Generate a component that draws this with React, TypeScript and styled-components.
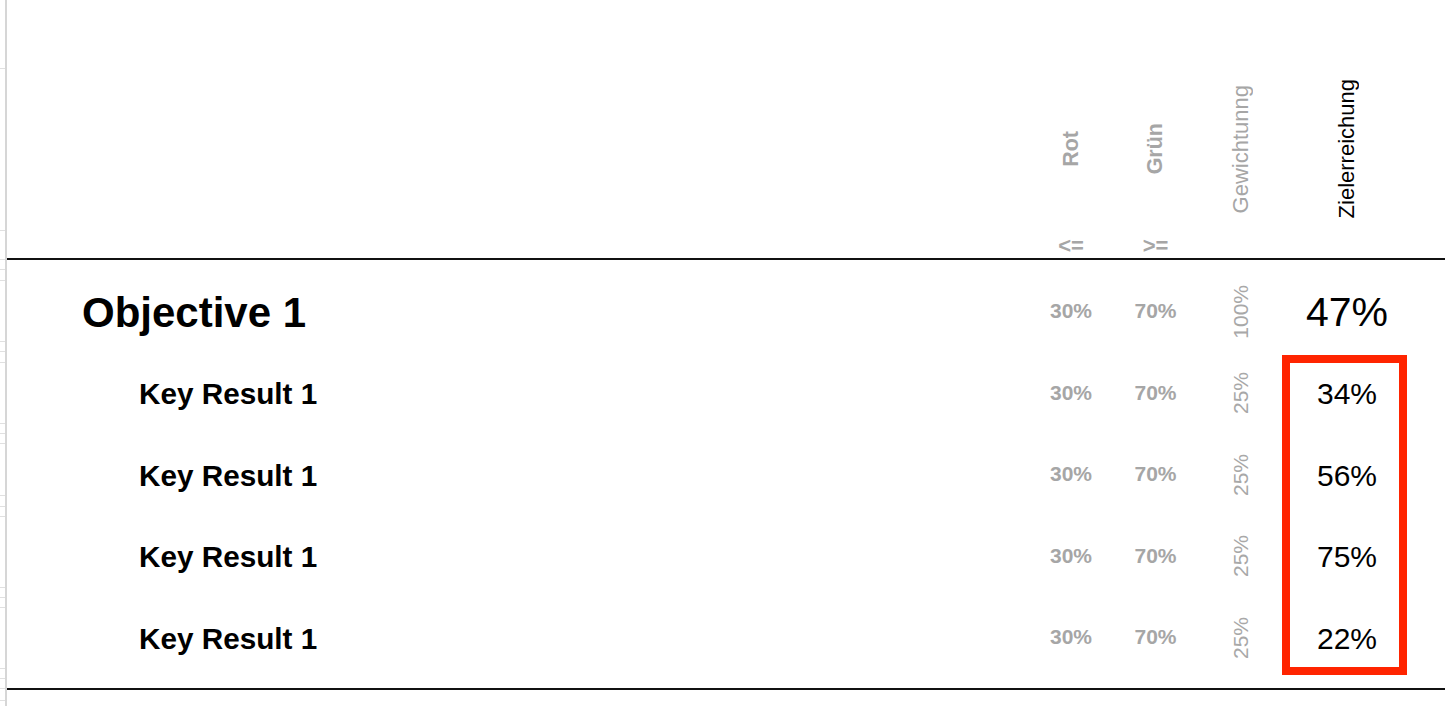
import React from 'react';
import styled, { createGlobalStyle } from 'styled-components';

const GlobalStyle = createGlobalStyle`
  html, body {
    margin: 0;
    padding: 0;
    background: #fff;
  }
  body {
    font-family: "Liberation Sans", Arial, sans-serif;
  }
  #root {
    width: 1445px;
    height: 706px;
    overflow: hidden;
  }
`;

const COLS = '1fr 84px 85px 85px 128px 34px';

const Page = styled.div`
  display: flex;
  width: 1445px;
  height: 706px;
  background: #fff;
`;

// spreadsheet row-header edge on the left
const RowRuler = styled.div`
  display: flex;
  flex-direction: column;
  flex-shrink: 0;
  width: 5px;
  border-right: 2px solid #d6d6d6;
`;

const RulerTick = styled.div<{ $h: number }>`
  box-sizing: border-box;
  flex-shrink: 0;
  height: ${p => p.$h}px;
  border-bottom: 1px solid #e0e0e0;
`;

const Sheet = styled.div`
  flex: 1;
  display: flex;
  flex-direction: column;
`;

const Header = styled.div`
  display: grid;
  grid-template-columns: ${COLS};
  grid-template-rows: 162px 28px;
  padding-top: 68px;
  border-bottom: 2px solid #111;
`;

const HeadLabel = styled.span<{ $col: number; $bold?: boolean; $dark?: boolean; $size: number }>`
  grid-column: ${p => p.$col};
  grid-row: 1;
  justify-self: center;
  align-self: center;
  writing-mode: vertical-rl;
  transform: rotate(180deg);
  font-size: ${p => p.$size}px;
  font-weight: ${p => (p.$bold ? 700 : 400)};
  color: ${p => (p.$dark ? '#000' : '#a6a6a6')};
  white-space: nowrap;
`;

const Operator = styled.span<{ $col: number }>`
  grid-column: ${p => p.$col};
  grid-row: 2;
  justify-self: center;
  align-self: center;
  padding-top: 4px;
  font-size: 22px;
  font-weight: 700;
  color: #a6a6a6;
`;

const Body = styled.div`
  display: grid;
  grid-template-columns: ${COLS};
  grid-template-rows: repeat(5, 81.5px);
  padding: 12px 0 8.5px;
  border-bottom: 2px solid #111;
`;

const Label = styled.div<{ $row: number; $indent: number; $size: number }>`
  grid-column: 1;
  grid-row: ${p => p.$row};
  align-self: center;
  padding-left: ${p => p.$indent}px;
  font-size: ${p => p.$size}px;
  font-weight: 700;
  color: #000;
`;

const Threshold = styled.div<{ $row: number; $col: number }>`
  grid-column: ${p => p.$col};
  grid-row: ${p => p.$row};
  justify-self: center;
  align-self: center;
  margin-bottom: 3px;
  font-size: 21px;
  font-weight: 700;
  color: #a6a6a6;
`;

const Weight = styled.span<{ $row: number }>`
  grid-column: 4;
  grid-row: ${p => p.$row};
  justify-self: center;
  align-self: center;
  margin-bottom: 2px;
  writing-mode: vertical-rl;
  transform: rotate(180deg);
  font-size: 21px;
  color: #a8a8a8;
`;

const Score = styled.div<{ $row: number; $size: number }>`
  grid-column: 5;
  grid-row: ${p => p.$row};
  justify-self: center;
  align-self: center;
  font-size: ${p => p.$size}px;
  color: #000;
`;

const Highlight = styled.div`
  grid-column: 5;
  grid-row: 2 / 6;
  margin: 1.5px 4px 4.5px -1px;
  border: 8px solid #ff2400;
`;

const ticks = [69, 162, 29, 10, 11, 61, 10, 11, 61, 10, 10, 52, 11, 10, 71, 10, 10, 61, 10, 10, 12];

const rows = [
  { label: 'Objective 1', objective: true, weight: '100%', score: '47%' },
  { label: 'Key Result 1', weight: '25%', score: '34%' },
  { label: 'Key Result 1', weight: '25%', score: '56%' },
  { label: 'Key Result 1', weight: '25%', score: '75%' },
  { label: 'Key Result 1', weight: '25%', score: '22%' },
];

const App = () => {
  return (
    <Page>
      <GlobalStyle />
      <RowRuler>
        {ticks.map((h, i) => (
          <RulerTick key={i} $h={h} />
        ))}
      </RowRuler>
      <Sheet>
        <Header>
          <HeadLabel $col={2} $bold $size={21.5}>Rot</HeadLabel>
          <HeadLabel $col={3} $bold $size={21.5}>Grün</HeadLabel>
          <HeadLabel $col={4} $size={22}>Gewichtunng</HeadLabel>
          <HeadLabel $col={5} $dark $size={22}>Zielerreichung</HeadLabel>
          <Operator $col={2}>&lt;=</Operator>
          <Operator $col={3}>&gt;=</Operator>
        </Header>
        <Body>
          {rows.map((r, i) => (
            <React.Fragment key={i}>
              <Label $row={i + 1} $indent={r.objective ? 75 : 132} $size={r.objective ? 42 : 29.7}>
                {r.label}
              </Label>
              <Threshold $row={i + 1} $col={2}>30%</Threshold>
              <Threshold $row={i + 1} $col={3}>70%</Threshold>
              <Weight $row={i + 1}>{r.weight}</Weight>
              <Score $row={i + 1} $size={r.objective ? 41 : 30}>{r.score}</Score>
            </React.Fragment>
          ))}
          <Highlight />
        </Body>
      </Sheet>
    </Page>
  );
};

export default App;
